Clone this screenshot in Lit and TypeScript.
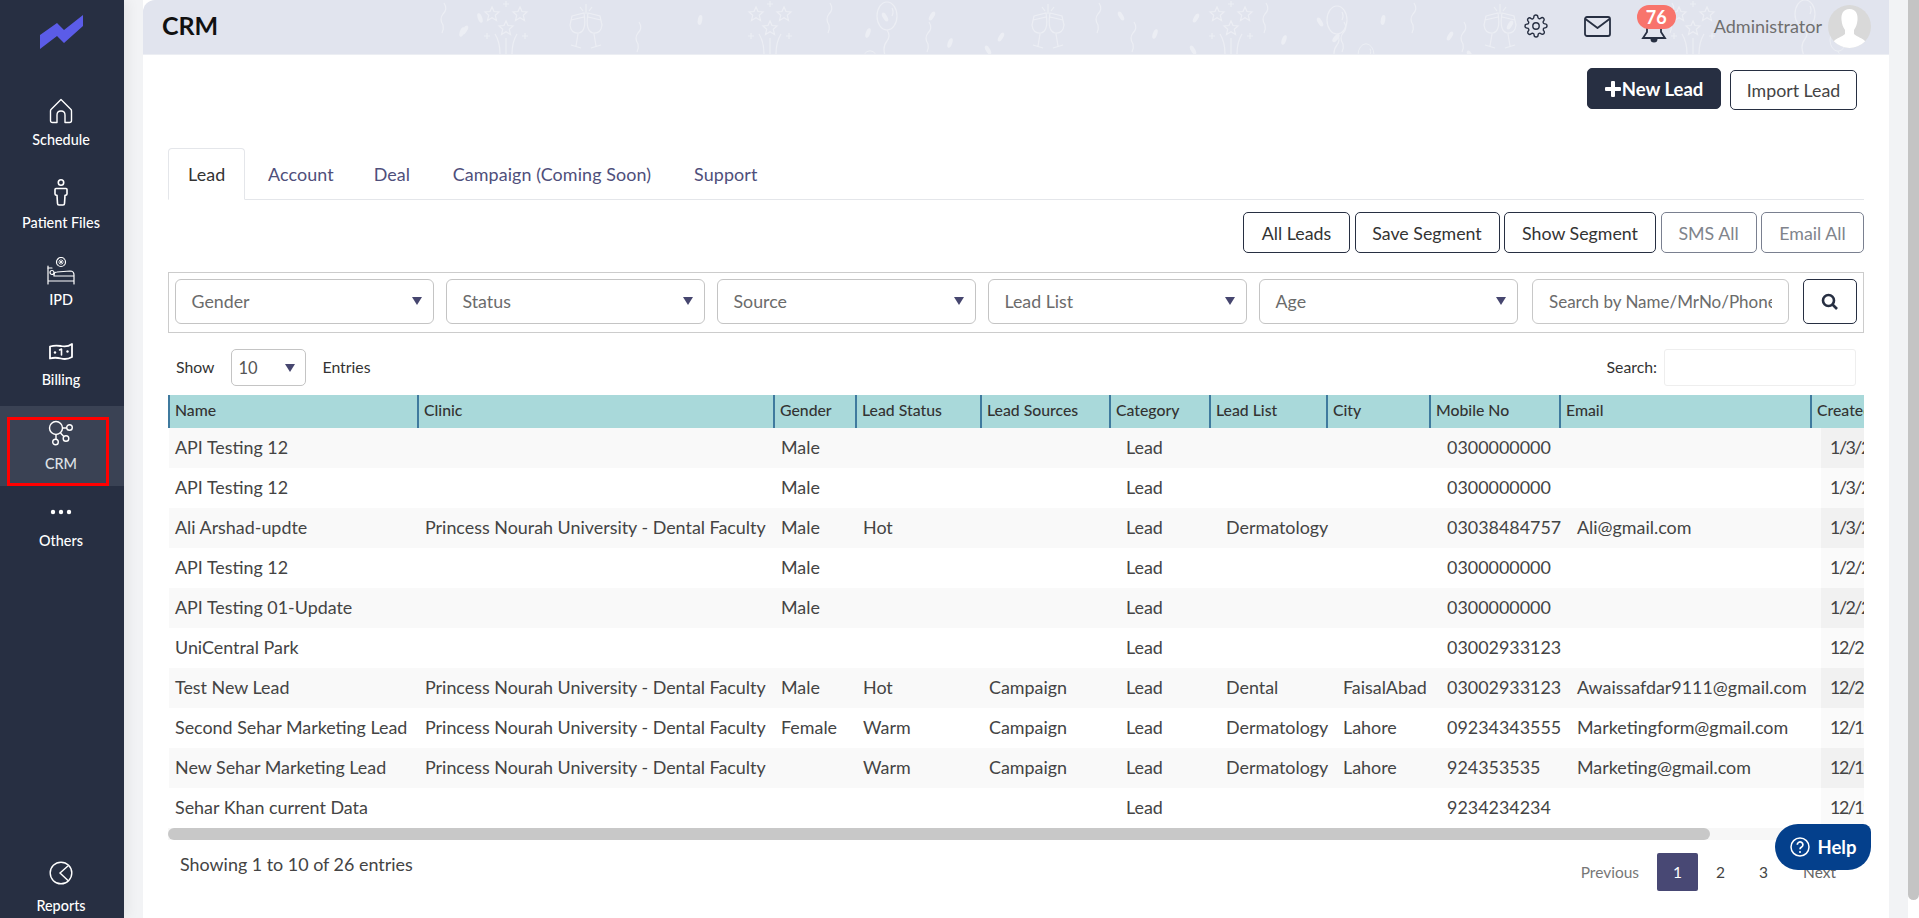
import { LitElement, html, css, svg } from "lit";
import { customElement } from "lit/decorators.js";

const rows = [
  ["API Testing 12","","Male","","","Lead","","","0300000000","","1/3/2024"],
  ["API Testing 12","","Male","","","Lead","","","0300000000","","1/3/2024"],
  ["Ali Arshad-updte","Princess Nourah University - Dental Faculty","Male","Hot","","Lead","Dermatology","","03038484757","Ali@gmail.com","1/3/2024"],
  ["API Testing 12","","Male","","","Lead","","","0300000000","","1/2/2024"],
  ["API Testing 01-Update","","Male","","","Lead","","","0300000000","","1/2/2024"],
  ["UniCentral Park","","","","","Lead","","","03002933123","","12/28/2023"],
  ["Test New Lead","Princess Nourah University - Dental Faculty","Male","Hot","Campaign","Lead","Dental","FaisalAbad","03002933123","Awaissafdar9111@gmail.com","12/26/2023"],
  ["Second Sehar Marketing Lead","Princess Nourah University - Dental Faculty","Female","Warm","Campaign","Lead","Dermatology","Lahore","09234343555","Marketingform@gmail.com","12/19/2023"],
  ["New Sehar Marketing Lead","Princess Nourah University - Dental Faculty","","Warm","Campaign","Lead","Dermatology","Lahore","924353535","Marketing@gmail.com","12/19/2023"],
  ["Sehar Khan current Data","","","","","Lead","","","9234234234","","12/19/2023"],
];
const cols = ["Name","Clinic","Gender","Lead Status","Lead Sources","Category","Lead List","City","Mobile No","Email","Created Date"];
const widths = [249,356,82,125,129,100,117,103,130,251,130];
const filters = ["Gender","Status","Source","Lead List","Age"];

const i = {
  logo: html`<svg width="44" height="34" viewBox="0 0 44 34"><path d="M0 20 L17 8 L24 15 L43 0 V11 L24 28 L17 21 L0 34Z" fill="#5b5ce8"/></svg>`,
  home: html`<svg width="24" height="26" viewBox="0 0 24 26" fill="none" stroke="#fff" stroke-width="1.4" stroke-linejoin="round"><path d="M12 1.5 L22 11.5 Q22.500 12 22.500 13 V22.500 Q22.500 24.500 20.500 24.500 H16 V17 Q16 13 12 13 Q8 13 8 17 V24.500 H3.500 Q1.500 24.500 1.500 22.500 V13 Q1.500 12 2 11.500Z"/></svg>`,
  person: html`<svg width="14" height="28" viewBox="0 0 14 28" fill="none" stroke="#fff" stroke-width="1.600"><circle cx="7" cy="3.500" r="2.700"/><path d="M2 9.500 H12 Q13 9.500 13 10.500 V15 Q13 16 11 16.500 L10.500 24.500 Q10.500 26 9 26 H5 Q3.500 26 3.500 24.500 L3 16.500 Q1 16 1 15 V10.500 Q1 9.500 2 9.500Z"/></svg>`,
  bed: html`<svg width="28" height="28" viewBox="0 0 28 28" fill="none" stroke="#fff" stroke-width="1.200" stroke-linecap="round"><path d="M1 9 V27 M1 24 H27 V27 M27 24 V18 Q27 14 23 14 L10 15 Q7 15 7 18 V19 H27"/><path d="M1 11 H5"/><circle cx="5" cy="15.500" r="2"/><circle cx="14" cy="5" r="4.500"/><path d="M14 2.500 V7.500 M11.500 5 H16.500 M12 3 L16 7 M16 3 L12 7" stroke-width=".8"/></svg>`,
  bill: html`<svg width="24" height="18" viewBox="0 0 24 18" fill="none" stroke="#fff" stroke-width="1.800" stroke-linejoin="round"><path d="M1 3.500 Q6 2 12 3 Q18 4.500 23 1 V14 Q18 17 12 15.500 Q6 14 1 15.500Z"/><circle cx="6" cy="9.500" r="1.200" fill="#fff" stroke="none"/><circle cx="18.500" cy="8.500" r="1.200" fill="#fff" stroke="none"/><path d="M10.500 7 L12.500 6 V12" stroke-width="1.600" stroke-linecap="round"/></svg>`,
  crm: html`<svg width="26" height="26" viewBox="0 0 26 26" fill="none" stroke="#fff" stroke-width="1.400"><circle cx="8" cy="8" r="6.500"/><circle cx="21.500" cy="7.500" r="2.800"/><circle cx="18" cy="18.500" r="2.800"/><circle cx="7.500" cy="22" r="2.800"/><path d="M14.500 8 H18.700 M12.500 13 L15.800 16.500 M8 14.500 V19.200"/></svg>`,
  dots: html`<svg width="22" height="6" viewBox="0 0 22 6" fill="#fff"><circle cx="3" cy="3" r="2.200"/><circle cx="11" cy="3" r="2.200"/><circle cx="19" cy="3" r="2.200"/></svg>`,
  reports: html`<svg width="24" height="24" viewBox="0 0 24 24" fill="none" stroke="#fff" stroke-width="1.400"><circle cx="12" cy="12" r="10.800"/><path d="M19.500 4.500 L11 12 L19.500 20"/></svg>`,
  gear: html`<svg width="24" height="24" viewBox="0 0 24 24" fill="none" stroke="#272f42" stroke-width="1.400" stroke-linejoin="round"><circle cx="12" cy="12" r="3.200"/><path d="M19.400 15a1.650 1.650 0 0 0 .33 1.820l.06.06a2 2 0 1 1-2.830 2.830l-.06-.06a1.650 1.650 0 0 0-2.800 1.170V21a2 2 0 1 1-4 0v-.09a1.650 1.650 0 0 0-2.880-1.110l-.06.06a2 2 0 1 1-2.830-2.830l.06-.06a1.650 1.650 0 0 0-1.170-2.800H3a2 2 0 1 1 0-4h.09a1.650 1.650 0 0 0 1.110-2.880l-.06-.06a2 2 0 1 1 2.830-2.830l.06.06a1.650 1.650 0 0 0 2.800-1.170V3a2 2 0 1 1 4 0v.09a1.650 1.650 0 0 0 2.880 1.110l.06-.06a2 2 0 1 1 2.830 2.830l-.06.06a1.650 1.650 0 0 0 1.170 2.800H21a2 2 0 1 1 0 4h-.09a1.650 1.650 0 0 0-1.510 1z"/></svg>`,
  mail: html`<svg width="27" height="21" viewBox="0 0 27 21" fill="none" stroke="#272f42" stroke-width="1.800" stroke-linejoin="round"><rect x="1" y="1" width="25" height="19" rx="2"/><path d="M1.500 3 L13.500 12 L25.500 3"/></svg>`,
  bell: html`<svg width="26" height="26" viewBox="0 0 26 26"><path d="M13 2 Q6 3 6 11 V15 L2 21 H24 L20 15 V11 Q20 3 13 2Z" fill="none" stroke="#272f42" stroke-width="1.800"/><path d="M9.500 22 a3.500 3.500 0 0 0 7 0Z" fill="#272f42"/></svg>`,
  avatar: html`<svg width="43" height="43" viewBox="0 0 43 43"><defs><clipPath id="av"><circle cx="21.500" cy="21.500" r="21.500"/></clipPath></defs><g clip-path="url(#av)"><rect width="43" height="43" fill="#d9d9d9"/><path d="M21.500 4 C15 4 13 9 13.500 15 C13.800 19 15 22 17 25 V29 C14 32 8 33 5 37 L5 43 H38 V37 C35 33 29 32 26 29 V25 C28 22 29.200 19 29.500 15 C30 9 28 4 21.500 4Z" fill="#fff"/></g></svg>`,
  search: html`<svg width="18" height="18" viewBox="0 0 18 18" fill="none" stroke="#272f42" stroke-width="2.600"><circle cx="7.500" cy="7.500" r="5.500"/><path d="M11.500 11.500 L16 16"/></svg>`,
  plus: html`<svg width="16" height="16" viewBox="0 0 16 16" fill="#fff"><path d="M6 1 Q6 0 7 0 H9 Q10 0 10 1 V6 H15 Q16 6 16 7 V9 Q16 10 15 10 H10 V15 Q10 16 9 16 H7 Q6 16 6 15 V10 H1 Q0 10 0 9 V7 Q0 6 1 6 H6Z"/></svg>`,
  help: html`<svg width="20" height="20" viewBox="0 0 20 20" fill="none" stroke="#fff" stroke-width="1.500"><circle cx="10" cy="10" r="9"/><path d="M7.300 7.800 a2.800 2.800 0 1 1 4.300 2.300 Q10 11 10 12.300" stroke-width="1.700"/><circle cx="10" cy="15" r="1" fill="#fff" stroke="none"/></svg>`,
};

const star = (x: number, y: number, s = 1) => svg`<path transform="translate(${x} ${y}) scale(${s})" d="M0 -7 L2 -2.500 L7 -2 L3.300 1.300 L4.500 6.500 L0 3.800 L-4.500 6.500 L-3.300 1.300 L-7 -2 L-2 -2.500Z"/>`;
const firework = (x: number) => svg`<g>
  ${star(x - 14, 14)}${star(x + 14, 14)}${star(x, 28)}
  <path d="M${x} 38 V54 M${x - 11} 34 Q${x - 6} 42 ${x - 6} 54 M${x + 11} 34 Q${x + 6} 42 ${x + 6} 54 M${x - 3} 4 h6 M${x} 1 v6 M${x - 22} 36 h6 M${x - 19} 33 v6 M${x + 16} 36 h6 M${x + 19} 33 v6"/></g>`;
const glasses = (x: number) => svg`<g transform="translate(${x - 18} 7)">
  <path d="M4 9 L16 6 Q19 24 11 26 Q3 27 2 18Z M20 6 L32 9 L34 18 Q33 27 25 26 Q17 24 20 6Z M3 13 L16 10 M20 10 L33 13"/>
  <path d="M10 27 L8 39 M3 38 L13 41 M26 27 L28 39 M23 41 L33 38 M12 0 l3 4 M24 0 l-3 4 M18 -3 V7"/></g>`;
const balloon = (x: number, y: number, s = 1) => svg`<g transform="translate(${x} ${y}) scale(${s})"><ellipse cx="0" cy="0" rx="10" ry="14"/><path d="M5 -8 Q7 -4 5 0 M0 14 Q4 20 0 25 Q-6 32 0 44"/></g>`;
const squiggle = (x: number, y: number) => svg`<path transform="translate(${x} ${y})" d="M4 0 Q8 6 3 11 Q-1 16 3 22 Q4 26 2 30"/>`;
const leaf = (x: number, y: number, r: number) => svg`<ellipse transform="translate(${x} ${y}) rotate(${r})" rx="2.200" ry="5" fill="#eceef4" stroke="none"/>`;

@customElement("app-root")
export class AppRoot extends LitElement {
  static styles = css`
    :host { display: flex; width: 100%; height: 100vh; overflow: hidden; background: #f2f3f5; font-family: "Lato", "Noto Sans", sans-serif; color: #444; }
    * { box-sizing: border-box; }
    .side { width: 124px; flex: none; background: #272f42; display: flex; flex-direction: column; box-shadow: 4px 0 12px rgba(0,0,0,.06); z-index: 1; }
    .logo { height: 83px; padding: 15px 0 0 40px; }
    .item { display: flex; flex-direction: column; align-items: center; color: #fff; font-size: 14.4px; font-weight: 500; padding: 14px 2px 0 0; height: 80px; position: relative; }
    .ic { height: 28px; display: flex; align-items: center; justify-content: center; }
    .lb { height: 18px; line-height: 18px; margin-top: 6px; white-space: nowrap; }
    .h82 { height: 82px; } .h78 { height: 78px; } .h81 { height: 81px; }
    .pf .lb { margin-top: 7px; } .bl .lb { margin-top: 5px; }
    .crm { background: #3a4254; color: #dfe1e6; padding-top: 13px; }
    .crm .lb { margin-top: 8px; }
    .mark { position: absolute; left: 7px; top: 11px; width: 102px; bottom: 0; border: 3px solid #f00; }
    .oth { padding-top: 12px; }
    .rep { margin-top: auto; height: 59px; padding-top: 0; }
    .rep .lb { margin-top: 10px; }
    .main { margin-left: 19px; width: 1746px; flex: none; height: 918px; background: #fff; }
    .top { height: 55px; background: #e1e4ee; border-top-left-radius: 12px; border-bottom: 1px solid #eceef3; display: flex; align-items: center; position: relative; overflow: hidden; }
    .pat { position: absolute; left: 0; top: 0; fill: none; stroke: #eceef4; stroke-width: 1.200; }
    .title { position: relative; margin-left: 19px; font-size: 25px; font-weight: 700; color: #111; margin-top: -4px; }
    .tools { position: relative; margin-left: auto; display: flex; align-items: center; height: 54px; padding-right: 18px; }
    .t1 { margin-right: 36px; display: flex; margin-top: -2px; }
    .t2 { margin-right: 30px; display: flex; margin-top: -2px; }
    .t3 { position: relative; display: flex; margin-right: 47px; margin-top: 5px; }
    .badge { position: absolute; left: -4px; top: -12px; width: 39px; height: 24px; border-radius: 12px; background: #f8746c; color: #fff; font-weight: 700; font-size: 18px; line-height: 24px; text-align: center; }
    .admin { font-size: 18px; color: #6f6f6f; margin-right: 6px; margin-top: -3px; }
    .avatar { display: flex; margin-top: -2px; }
    .body { padding: 13px 25px 0; }
    .acts { display: flex; justify-content: flex-end; align-items: flex-start; gap: 9px; padding-right: 7px; height: 42px; }
    .btn { display: flex; align-items: center; justify-content: center; height: 41px; border: 1px solid #272f42; border-radius: 5px; background: #fff; color: #333; font-size: 17.8px; white-space: nowrap; font-family: inherit; padding: 0; }
    .new { width: 134px; background: #272f42; color: #fff; font-weight: 700; gap: 1px; font-size: 18.500px; }
    .imp { width: 127px; margin-top: 2px; height: 40px; color: #444; }
    .tabs { margin-top: 38px; height: 52px; display: flex; border-bottom: 1px solid #e4e6ea; align-items: flex-start; }
    .tab { height: 52px; line-height: 50px; padding: 0 19px; margin-right: 1px; color: #4f4f7b; font-size: 17.9px; letter-spacing: .1px; white-space: nowrap; border: 1px solid transparent; }
    .tab:nth-child(2) { margin-right: 0; }
    .tab:nth-child(3) { margin-right: 2.500px; }
    .tab:nth-child(4) { margin-right: 3px; }
    .tab.on { width: 77px; margin-right: 3px; background: #fff; color: #333; border-color: #e4e6ea; border-bottom-color: #fff; border-radius: 4px 4px 0 0; }
    .segs { margin-top: 12px; display: flex; justify-content: flex-end; gap: 4.500px; }
    .w107 { width: 107px; } .w145 { width: 145px; } .w152 { width: 152px; } .w96 { width: 96px; } .w103 { width: 103px; }
    .dim { border-color: #7a8090; color: #80848c; }
    .filter { margin-top: 19px; height: 61px; border: 1px solid #ccc; padding: 6px; display: flex; align-items: flex-start; gap: 12px; }
    .sel { width: 259px; height: 45px; border: 1px solid #c4c4c4; border-radius: 6px; display: flex; align-items: center; justify-content: space-between; padding: 0 11px 2px 15.500px; font-size: 17.8px; color: #6b6b6b; flex: none; }
    .arrow { width: 0; height: 0; border-left: 5px solid transparent; border-right: 5px solid transparent; border-top: 8px solid #46466f; }
    .q { width: 257px; flex: none; height: 45px; border: 1px solid #c8c8c8; border-radius: 6px; margin-left: 2px; padding: 0 16px; display: flex; align-items: center; font-size: 17px; color: #6b6b6b; }
    .q span { overflow: hidden; white-space: nowrap; }
    .go { width: 54px; height: 45px; margin-left: 2px; flex: none; border: 1px solid #272f42; border-radius: 5px; display: flex; align-items: center; justify-content: center; background: #fff; }
    .show { margin-top: 16px; height: 37px; display: flex; align-items: center; font-size: 15.800px; color: #333; padding: 0 0 2px 8px; }
    .mini { width: 75px; height: 37px; margin: 2px 17px 0 16px; border: 1px solid #c4c4c4; border-radius: 5px; display: flex; align-items: center; justify-content: space-between; padding: 0 10px 0 7px; font-size: 16.500px; color: #555; }
    .sbox { margin-left: auto; display: flex; align-items: center; padding-right: 8px; gap: 7px; }
    .sinp { width: 192px; height: 37px; margin-top: 2px; border: 1px solid #eee; border-radius: 3px; }
    .wrap { margin-top: 9px; overflow: hidden; width: 1696px; }
    table { border-collapse: collapse; table-layout: fixed; width: 1772px; }
    th { height: 33px; background: #a9d9da; font-weight: 500; font-size: 15.800px; color: #333; text-align: left; padding: 0 0 4px 5px; border-left: 2px solid #3f7a9e; white-space: nowrap; overflow: hidden; }
    td { height: 40px; font-size: 17.900px; color: #444; padding: 0 0 2px 7px; white-space: nowrap; overflow: visible; }
    tr:nth-child(odd) td { background: #f9f9f9; }
    td.c0 { padding-left: 6px; }
    td.c4 { padding-left: 8px; }
    td.c5, td.c6, td.c7 { padding-left: 16px; }
    td.c8 { padding-left: 17px; }
    td.c9 { padding-left: 17px; }
    td.c10 { padding-left: 19px; letter-spacing: -1.500px; background: linear-gradient(to right, #fff 10px, #fafafa 10px); }
    tr:nth-child(odd) td.c10 { background: linear-gradient(to right, #f9f9f9 10px, #f1f1f1 10px); }
    .bar { height: 12px; background: #f7f7f7; }
    .thumb { width: 1542px; height: 12px; background: #c8c8c8; border-radius: 6px; }
    .foot { height: 50px; display: flex; align-items: flex-start; padding-left: 12px; }
    .info { margin-top: 13px; color: #444; font-size: 17.900px; }
    .pages { margin-left: auto; display: flex; align-items: center; margin-top: 13px; color: #444; font-size: 15.500px; padding-right: 28px; }
    .prev { color: #777; margin-right: 18px; }
    .pg { width: 41px; height: 38px; display: flex; align-items: center; justify-content: center; margin-right: 2px; border-radius: 2px; }
    .pg.on { background: #484874; color: #fff; }
    .next { margin-left: 17px; color: #666; }
    .bar2 { width: 11px; flex: none; margin-left: 19px; height: 918px; background: #fff; }
    .bar2 i { display: block; height: 900px; background: #c4c4c4; border-radius: 0 0 6px 6px; }
    .helpb { position: absolute; left: 1775px; top: 824px; width: 96px; height: 46px; background: #04408c; color: #fff; font-weight: 700; font-size: 18.500px; border-radius: 23px 8px 23px 23px; display: flex; align-items: center; justify-content: center; gap: 8px; }
  `;

  render() {
    const o = 143;
    return html`
      <nav class="side">
        <div class="logo">${i.logo}</div>
        <div class="item h82"><span class="ic">${i.home}</span><span class="lb">Schedule</span></div>
        <div class="item h78 pf"><span class="ic">${i.person}</span><span class="lb">Patient Files</span></div>
        <div class="item h81"><span class="ic">${i.bed}</span><span class="lb">IPD</span></div>
        <div class="item h82 bl"><span class="ic">${i.bill}</span><span class="lb">Billing</span></div>
        <div class="item crm"><span class="ic">${i.crm}</span><span class="lb">CRM</span><span class="mark"></span></div>
        <div class="item oth"><span class="ic">${i.dots}</span><span class="lb">Others</span></div>
        <div class="item rep"><span class="ic">${i.reports}</span><span class="lb">Reports</span></div>
      </nav>
      <main class="main">
        <header class="top">
          <svg class="pat" width="1746" height="54">
            ${[506, 770, 1231, 1693].map((x) => firework(x - o))}
            ${[586, 1048, 1500].map((x) => glasses(x - o))}
            ${[[887, 16, 1], [870, 62, .8], [1337, 20, 1], [1366, 55, .8], [1805, 14, 1], [1838, 40, .8]].map((a) => balloon(a[0] - o, a[1], a[2]))}
            ${[440, 635, 826, 925, 1095, 1130, 1262, 1340, 1410, 1460, 1668].map((x, n) => squiggle(x - o, n % 2 ? 22 : 3))}
            ${[[462, 32, 20], [480, 18, -20], [465, 30, 30], [700, 20, 10], [868, 33, 20], [885, 17, -30], [932, 16, 30], [950, 43, 20], [1001, 37, 30], [988, 50, -30], [1155, 34, 20], [1121, 16, -30], [1196, 18, 30], [1193, 50, -30], [1284, 40, 20], [1320, 22, -30], [1336, 38, 40], [1383, 20, 10], [1450, 36, 30], [1470, 55, -30], [1510, 25, 30]].map((a) => leaf(a[0] - o, a[1], a[2]))}
          </svg>
          <div class="title">CRM</div>
          <div class="tools">
            <span class="t1">${i.gear}</span>
            <span class="t2">${i.mail}</span>
            <span class="t3">${i.bell}<span class="badge">76</span></span>
            <span class="admin">Administrator</span>
            <span class="avatar">${i.avatar}</span>
          </div>
        </header>
        <div class="body">
          <div class="acts">
            <button class="btn new">${i.plus}New Lead</button>
            <button class="btn imp">Import Lead</button>
          </div>
          <div class="tabs">
            ${["Lead", "Account", "Deal", "Campaign (Coming Soon)", "Support"].map((t, n) => html`<div class="tab ${n === 0 ? "on" : ""}">${t}</div>`)}
          </div>
          <div class="segs">
            <button class="btn w107">All Leads</button>
            <button class="btn w145">Save Segment</button>
            <button class="btn w152">Show Segment</button>
            <button class="btn w96 dim">SMS All</button>
            <button class="btn w103 dim">Email All</button>
          </div>
          <div class="filter">
            ${filters.map((f) => html`<div class="sel">${f}<span class="arrow"></span></div>`)}
            <div class="q"><span>Search by Name/MrNo/Phone</span></div>
            <div class="go">${i.search}</div>
          </div>
          <div class="show">Show<div class="mini">10<span class="arrow"></span></div>Entries
            <div class="sbox">Search:<div class="sinp"></div></div>
          </div>
          <div class="wrap">
            <table>
              <colgroup>${widths.map((w) => html`<col style="width:${w}px">`)}</colgroup>
              <thead><tr>${cols.map((c) => html`<th>${c}</th>`)}</tr></thead>
              <tbody>${rows.map((r) => html`<tr>${r.map((c, n) => html`<td class="c${n}">${c}</td>`)}</tr>`)}</tbody>
            </table>
            <div class="bar"><div class="thumb"></div></div>
          </div>
          <div class="foot">
            <div class="info">Showing 1 to 10 of 26 entries</div>
            <div class="pages"><span class="prev">Previous</span><span class="pg on">1</span><span class="pg">2</span><span class="pg">3</span><span class="next">Next</span></div>
          </div>
        </div>
      </main>
      <div class="bar2"><i></i></div>
      <div class="helpb">${i.help}Help</div>
    `;
  }
}
